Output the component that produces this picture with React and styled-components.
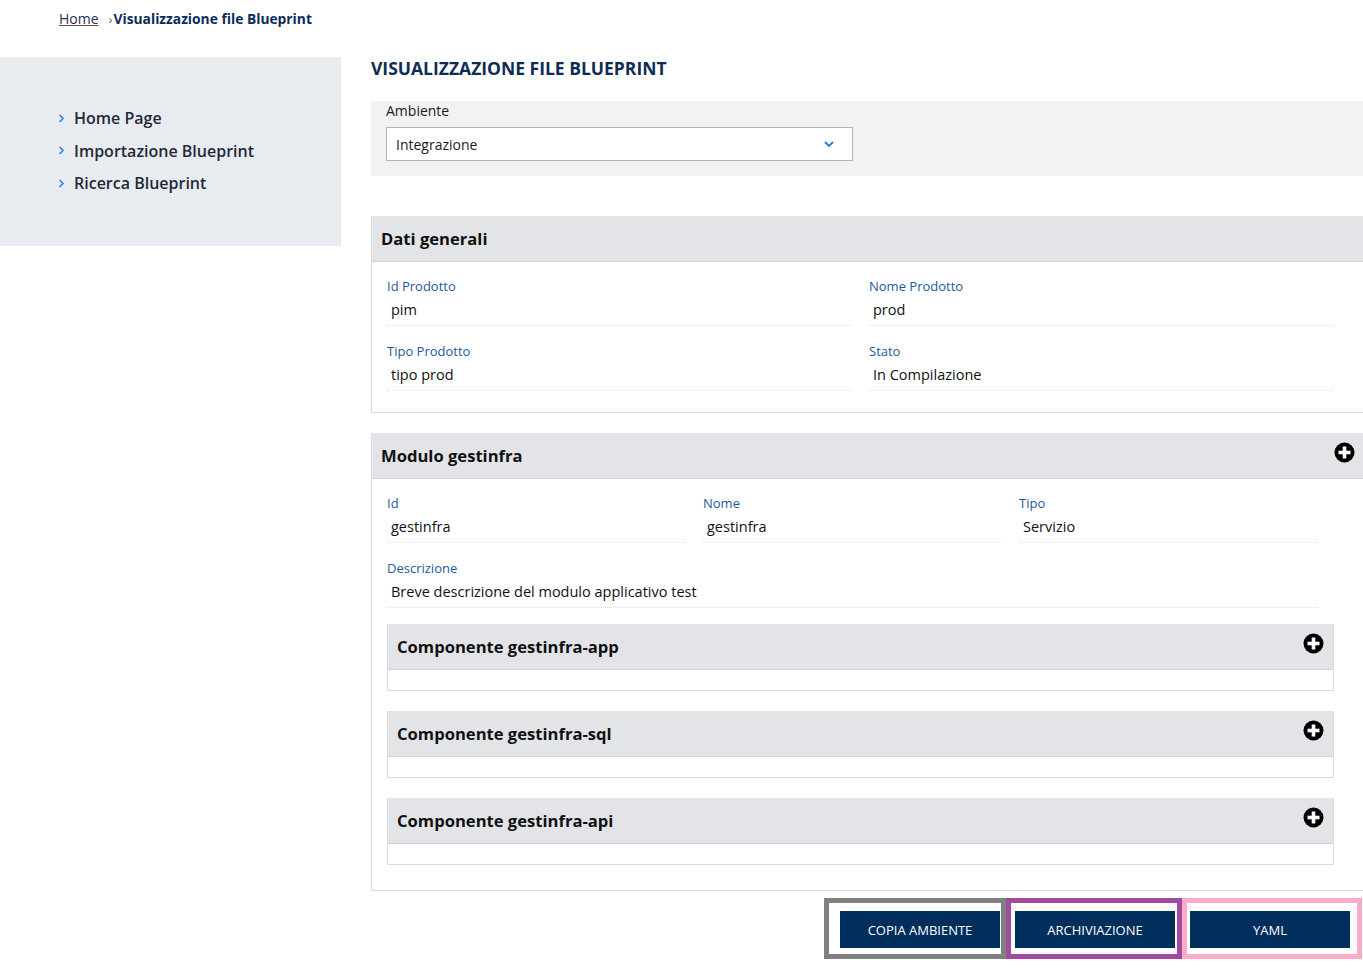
import React from "react";
import styled, { createGlobalStyle } from "styled-components";

const Global = createGlobalStyle`
  html, body { margin: 0; padding: 0; overflow-x: hidden; }
  body { font-family: "Open Sans", "Noto Sans", sans-serif; color: #1a1a1a; background: #fff; }
`;

const Page = styled.div`
  width: 1365px;
`;

const Breadcrumb = styled.nav`
  display: flex;
  align-items: flex-start;
  padding: 9px 0 0 59px;
  height: 57px;
  box-sizing: border-box;
  font-size: 14px;
  line-height: 20px;
`;

const CrumbLink = styled.a`
  color: #23305a;
  text-decoration: underline;
  text-decoration-color: #7a4a3a;
  margin-right: 10px;
`;

const CrumbSep = styled.span`
  color: #666;
  font-size: 13px;
  margin-right: 1px;
`;

const CrumbCurrent = styled.span`
  color: #0b2d5b;
  font-weight: 700;
  font-size: 13.8px;
`;

const Layout = styled.div`
  display: flex;
  align-items: flex-start;
  gap: 30px;
`;

const Sidebar = styled.aside`
  width: 341px;
  flex: none;
  background: #e8ebf0;
  padding: 45px 0 46px 58px;
  box-sizing: border-box;
`;

const NavItem = styled.div`
  display: flex;
  align-items: center;
  gap: 9px;
  font-size: 16px;
  line-height: 32.5px;
  font-weight: 600;
  color: #1f2a38;
`;

const NavChevron = styled.svg`
  width: 7px;
  height: 9px;
  flex: none;
`;

const Main = styled.main`
  flex: 1;
  min-width: 0;
`;

const Title = styled.h1`
  margin: 0;
  font-size: 17.5px;
  line-height: 22px;
  font-weight: 700;
  color: #0e2c54;
  height: 44px;
  box-sizing: border-box;
`;

const FilterPanel = styled.div`
  background: #f2f2f2;
  padding: 0 15px 15px 15px;
  margin-right: 2px;
`;

const FilterLabel = styled.div`
  font-size: 14px;
  line-height: 20px;
  color: #1a1a1a;
  margin-bottom: 6px;
`;

const Select = styled.div`
  width: 467px;
  height: 34px;
  box-sizing: border-box;
  border: 1px solid #b4b4b4;
  background: #fff;
  display: flex;
  align-items: center;
  justify-content: space-between;
  padding: 0 18px 0 9px;
  font-size: 14px;
  color: #1a1a1a;
`;

const Card = styled.section`
  border: 1px solid #dcdcdc;
  border-top: none;
  margin-top: ${(p) => p.$mt}px;
`;

const CardHeader = styled.header`
  position: relative;
  height: 46px;
  box-sizing: border-box;
  background: #e3e4e8;
  border-bottom: 1px solid #d3d4d8;
  display: flex;
  align-items: center;
  padding-left: 9px;
  font-size: 16.6px;
  font-weight: 700;
  color: #111;
`;

const PlusIcon = styled.svg`
  position: absolute;
  top: 9px;
  right: 9px;
  width: 21px;
  height: 21px;
`;

const CardBody = styled.div`
  padding: 15px ${(p) => p.$pr}px 5px 15px;
`;

const FieldGrid = styled.div`
  display: grid;
  grid-template-columns: repeat(${(p) => p.$cols}, 1fr);
  column-gap: ${(p) => p.$gap}px;
  margin-right: ${(p) => p.$mr || 0}px;
`;

const Field = styled.div`
  grid-column: span ${(p) => p.$span || 1};
  margin-bottom: 16px;
`;

const FieldLabel = styled.div`
  font-size: 13px;
  line-height: 18px;
  color: #1d5a9c;
`;

const FieldValue = styled.div`
  font-size: 14.5px;
  line-height: 20px;
  padding: 5px 4px 5px 4px;
  border-bottom: 1px dotted #e2e2e2;
  color: #111;
`;

const SubCard = styled.div`
  border: 1px solid #dcdcdc;
  border-top: none;
  margin-bottom: 20px;
`;

const SubBody = styled.div`
  height: 20px;
`;

const Actions = styled.div`
  display: flex;
  justify-content: flex-end;
  margin-top: 7px;
  margin-right: 3px;
`;

const Frame = styled.div`
  border: 5px solid ${(p) => p.$color};
  padding: 8px ${(p) => p.$pr}px 6px ${(p) => p.$pl}px;
`;

const Button = styled.button`
  width: 160px;
  height: 37px;
  border: none;
  background: #002e5d;
  color: #fff;
  font-family: "Open Sans", "Noto Sans", sans-serif;
  font-size: 13px;
  text-transform: uppercase;
  display: block;
  padding: 0;
`;

const Chevron = () => (
  <NavChevron viewBox="0 0 7 9">
    <path d="M1.5 1 L5 4.5 L1.5 8" fill="none" stroke="#2f86dc" strokeWidth="1.6" />
  </NavChevron>
);

const Plus = () => (
  <PlusIcon viewBox="0 0 21 21">
    <circle cx="10.5" cy="10.5" r="10" fill="#000" />
    <rect x="4.5" y="8.7" width="12" height="3.6" fill="#fff" />
    <rect x="8.7" y="4.5" width="3.6" height="12" fill="#fff" />
  </PlusIcon>
);

const F = ({ label, value, span }) => (
  <Field $span={span}>
    <FieldLabel>{label}</FieldLabel>
    <FieldValue>{value}</FieldValue>
  </Field>
);

const components = ["gestinfra-app", "gestinfra-sql", "gestinfra-api"];

export default function App() {
  return (
    <Page>
      <Global />
      <Breadcrumb>
        <CrumbLink href="#">Home</CrumbLink>
        <CrumbSep>›</CrumbSep>
        <CrumbCurrent>Visualizzazione file Blueprint</CrumbCurrent>
      </Breadcrumb>
      <Layout>
        <Sidebar>
          <NavItem><Chevron />Home Page</NavItem>
          <NavItem><Chevron />Importazione Blueprint</NavItem>
          <NavItem><Chevron />Ricerca Blueprint</NavItem>
        </Sidebar>
        <Main>
          <Title>VISUALIZZAZIONE FILE BLUEPRINT</Title>
          <FilterPanel>
            <FilterLabel>Ambiente</FilterLabel>
            <Select>
              <span>Integrazione</span>
              <svg width="10" height="7" viewBox="0 0 10 7">
                <path d="M1 1 L5 5 L9 1" fill="none" stroke="#1f7ae0" strokeWidth="1.8" />
              </svg>
            </Select>
          </FilterPanel>

          <Card $mt={40}>
            <CardHeader>Dati generali</CardHeader>
            <CardBody $pr={31}>
              <FieldGrid $cols={2} $gap={18}>
                <F label="Id Prodotto" value="pim" />
                <F label="Nome Prodotto" value="prod" />
                <F label="Tipo Prodotto" value="tipo prod" />
                <F label="Stato" value="In Compilazione" />
              </FieldGrid>
            </CardBody>
          </Card>

          <Card $mt={20}>
            <CardHeader>
              Modulo gestinfra
              <Plus />
            </CardHeader>
            <CardBody $pr={30}>
              <FieldGrid $cols={3} $gap={17} $mr={16}>
                <F label="Id" value="gestinfra" />
                <F label="Nome" value="gestinfra" />
                <F label="Tipo" value="Servizio" />
                <F label="Descrizione" value="Breve descrizione del modulo applicativo test" span={3} />
              </FieldGrid>
              {components.map((c) => (
                <SubCard key={c}>
                  <CardHeader>
                    Componente {c}
                    <Plus />
                  </CardHeader>
                  <SubBody />
                </SubCard>
              ))}
            </CardBody>
          </Card>

          <Actions>
            <Frame $color="#808080" $pl={11} $pr={1}>
              <Button>Copia ambiente</Button>
            </Frame>
            <Frame $color="#a04aa0" $pl={4} $pr={2}>
              <Button>Archiviazione</Button>
            </Frame>
            <Frame $color="#fcaccb" $pl={3} $pr={7}>
              <Button>Yaml</Button>
            </Frame>
          </Actions>
        </Main>
      </Layout>
    </Page>
  );
}
